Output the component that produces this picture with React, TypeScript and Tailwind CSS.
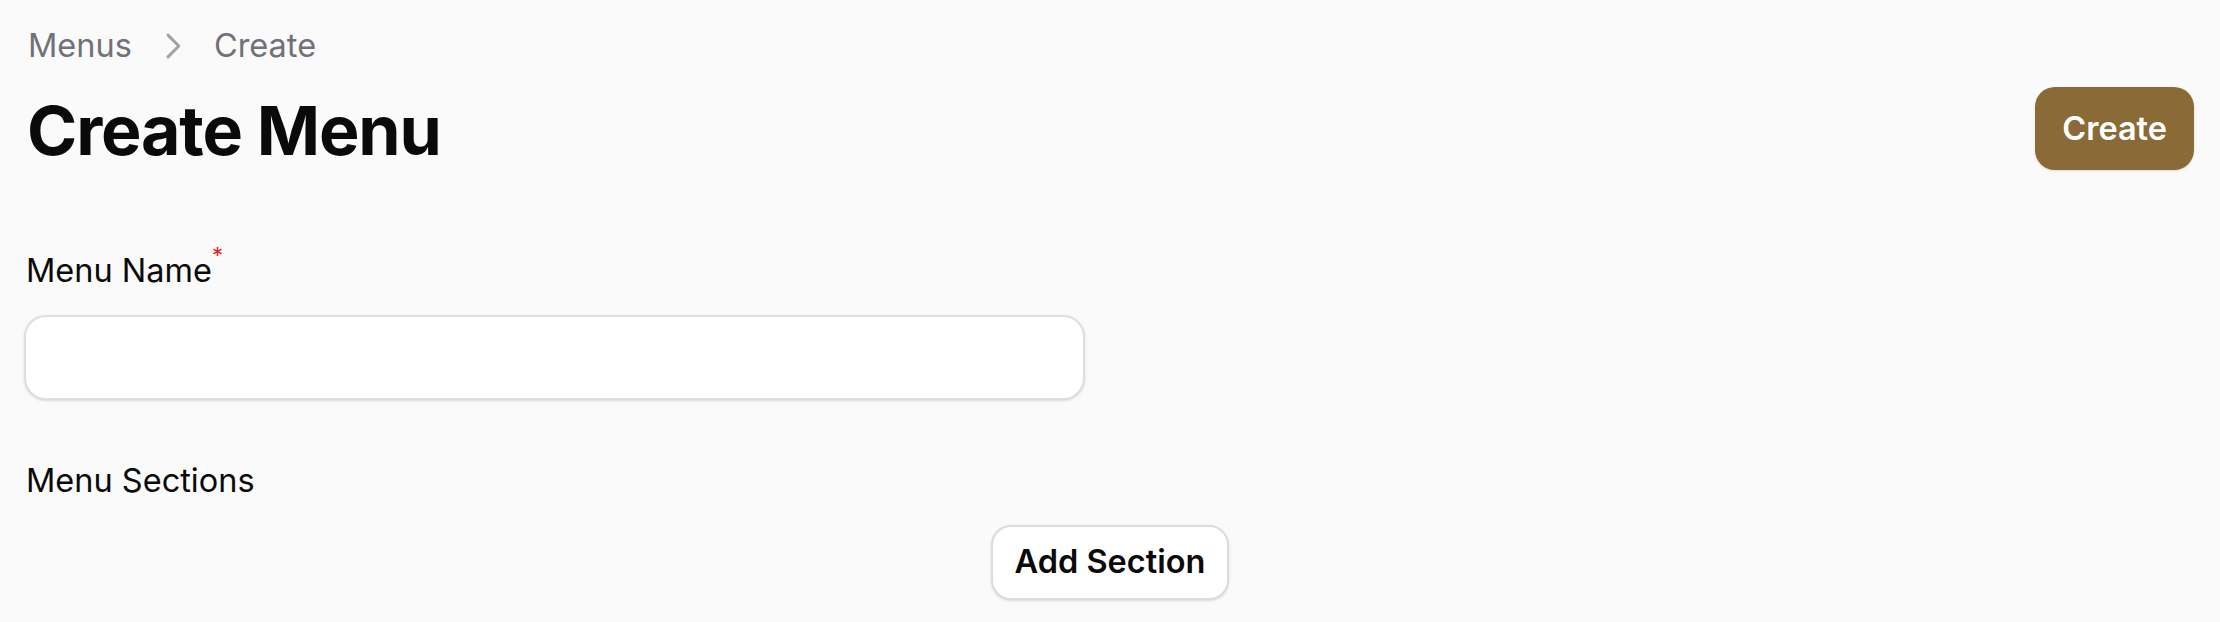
export default function App() {
  return (
    <div
      className="min-h-[622px] w-full bg-[#fafafa] pl-[26px] pr-[26px] pt-[23px] text-[#0a0a0a]"
      style={{ fontFamily: 'Inter, "Noto Sans", sans-serif' }}
    >
      {/* Breadcrumbs */}
      <nav className="ml-[2px] flex h-[45px] items-center gap-[21px] text-[32.5px] leading-[45px] text-[#71717a]">
        <span>Menus</span>
        <svg width="40" height="40" viewBox="0 0 24 24" fill="none" className="text-[#a1a1aa]">
          <path d="M9 5.5l6.5 6.5L9 18.5" stroke="currentColor" strokeWidth="1.8" strokeLinecap="round" strokeLinejoin="round" />
        </svg>
        <span>Create</span>
      </nav>

      {/* Header */}
      <div className="mt-[19px] flex h-[83px] items-center justify-between">
        <h1 className="ml-[1px] pt-[3px] text-[68px] font-bold leading-[68px] tracking-[-0.017em]">Create Menu</h1>
        <button className="h-[83px] rounded-[20px] bg-[#8a6a36] px-[27px] pt-[2px] text-[32.5px] font-semibold text-white shadow-sm">
          Create
        </button>
      </div>

      {/* Form */}
      <div className="mt-[78px]">
        <label className="block text-[32.5px] font-normal leading-[45px]">
          Menu Name<sup className="align-[8px] text-[22px] text-[#dc2626]">*</sup>
        </label>
        <input
          type="text"
          className="mt-[22px] -ml-[2px] block h-[85px] w-[1061px] rounded-[22px] border-[2px] border-[#dedede] bg-white shadow-sm outline-none"
        />
      </div>

      <div className="mt-[58px]">
        <div className="text-[32.5px] font-normal leading-[45px]">Menu Sections</div>
        <div className="mt-[22px] flex justify-center">
          <button className="h-[75px] rounded-[20px] border-[2px] border-[#dcdcdc] bg-white px-[22px] text-[32.5px] font-semibold shadow-sm">
            Add Section
          </button>
        </div>
      </div>
    </div>
  );
}
